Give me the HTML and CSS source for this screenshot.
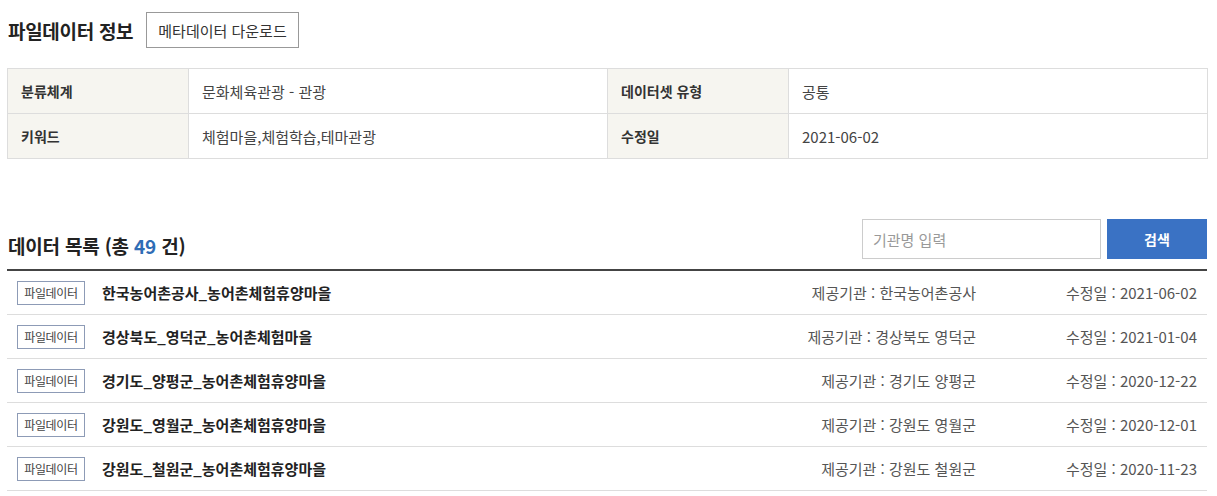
FILE: index.html
```html
<!DOCTYPE html>
<html lang="ko">
<head>
<meta charset="utf-8">
<link rel="stylesheet" href="styles.css">
</head>
<body>
<div class="page">
  <div class="head-row">
    <h2 class="title">파일데이터 정보</h2>
    <button class="btn-meta">메타데이터 다운로드</button>
  </div>
  <table class="info">
    <tr>
      <th>분류체계</th><td>문화체육관광 - 관광</td>
      <th>데이터셋 유형</th><td>공통</td>
    </tr>
    <tr>
      <th>키워드</th><td>체험마을,체험학습,테마관광</td>
      <th>수정일</th><td>2021-06-02</td>
    </tr>
  </table>

  <div class="list-head">
    <h3 class="list-title">데이터 목록 (총 <span class="count">49</span> 건)</h3>
    <div class="search">
      <input class="search-input" type="text" placeholder="기관명 입력">
      <button class="search-btn">검색</button>
    </div>
  </div>
  <ul class="list">
    <li class="item"><span class="badge">파일데이터</span><span class="name">한국농어촌공사_농어촌체험휴양마을</span><span class="org">제공기관 : 한국농어촌공사</span><span class="date">수정일 : 2021-06-02</span></li>
    <li class="item"><span class="badge">파일데이터</span><span class="name">경상북도_영덕군_농어촌체험마을</span><span class="org">제공기관 : 경상북도 영덕군</span><span class="date">수정일 : 2021-01-04</span></li>
    <li class="item"><span class="badge">파일데이터</span><span class="name">경기도_양평군_농어촌체험휴양마을</span><span class="org">제공기관 : 경기도 양평군</span><span class="date">수정일 : 2020-12-22</span></li>
    <li class="item"><span class="badge">파일데이터</span><span class="name">강원도_영월군_농어촌체험휴양마을</span><span class="org">제공기관 : 강원도 영월군</span><span class="date">수정일 : 2020-12-01</span></li>
    <li class="item"><span class="badge">파일데이터</span><span class="name">강원도_철원군_농어촌체험휴양마을</span><span class="org">제공기관 : 강원도 철원군</span><span class="date">수정일 : 2020-11-23</span></li>
  </ul>
</div>
</body>
</html>
```

FILE: styles.css
```css
* { box-sizing: border-box; }
html, body { margin: 0; padding: 0; background: #fff; }
body {
  font-family: "Noto Sans CJK KR", "Noto Sans", sans-serif;
  color: #333;
  font-size: 15px;
}
.page { width: 1207px; padding: 12px 0 0 7px; }
.head-row { display: flex; align-items: center; height: 36px; }
.title {
  margin: 0 13px 0 1px;
  font-size: 19px;
  font-weight: 700;
  color: #222;
  letter-spacing: -0.3px;
}
.btn-meta {
  height: 36px;
  padding: 0 11px;
  border: 1px solid #999;
  background: #fff;
  font-family: inherit;
  font-size: 15px;
  color: #333;
  cursor: pointer;
}
.info {
  margin-top: 20px;
  width: 1200px;
  border-collapse: collapse;
  table-layout: fixed;
}
.info th, .info td {
  height: 45px;
  border: 1px solid #ddd;
  padding: 0 13px;
  text-align: left;
}
.info th { background: #f6f5f0; width: 181px; font-weight: 700; color: #333; font-size: 14px; }
.info td { width: 419px; color: #444; font-size: 15px; }
.list-head {
  margin-top: 60px;
  display: flex;
  justify-content: space-between;
  align-items: center;
  padding-bottom: 10px;
  border-bottom: 2px solid #444;
}
.list-title {
  margin: 13px 0 0 1px;
  font-size: 19px;
  font-weight: 700;
  color: #222;
  letter-spacing: -0.2px;
}
.count { color: #2f6db5; }
.search { display: flex; gap: 6px; }
.search-input {
  width: 239px;
  height: 40px;
  border: 1px solid #ccc;
  padding: 0 10px;
  font-family: inherit;
  font-size: 15px;
  color: #333;
  outline: none;
}
.search-input::placeholder { color: #999; }
.search-btn {
  width: 100px;
  height: 40px;
  border: 0;
  background: #3a72c4;
  color: #fff;
  font-family: inherit;
  font-size: 14px;
  font-weight: 700;
}
.list { list-style: none; margin: 0; padding: 0; width: 1200px; }
.item {
  display: flex;
  align-items: center;
  height: 44px;
  border-bottom: 1px solid #ddd;
  padding: 0 10px;
}
.badge {
  display: inline-flex;
  align-items: center;
  justify-content: center;
  width: 68px;
  height: 24px;
  border: 1px solid #8d9bb6;
  font-size: 12px;
  color: #444;
  letter-spacing: -0.3px;
}
.name {
  margin-left: 17px;
  font-weight: 700;
  color: #222;
  font-size: 15px;
  flex: 1;
}
.org { color: #555; text-align: right; }
.date { color: #555; width: 221px; text-align: right; }
```
